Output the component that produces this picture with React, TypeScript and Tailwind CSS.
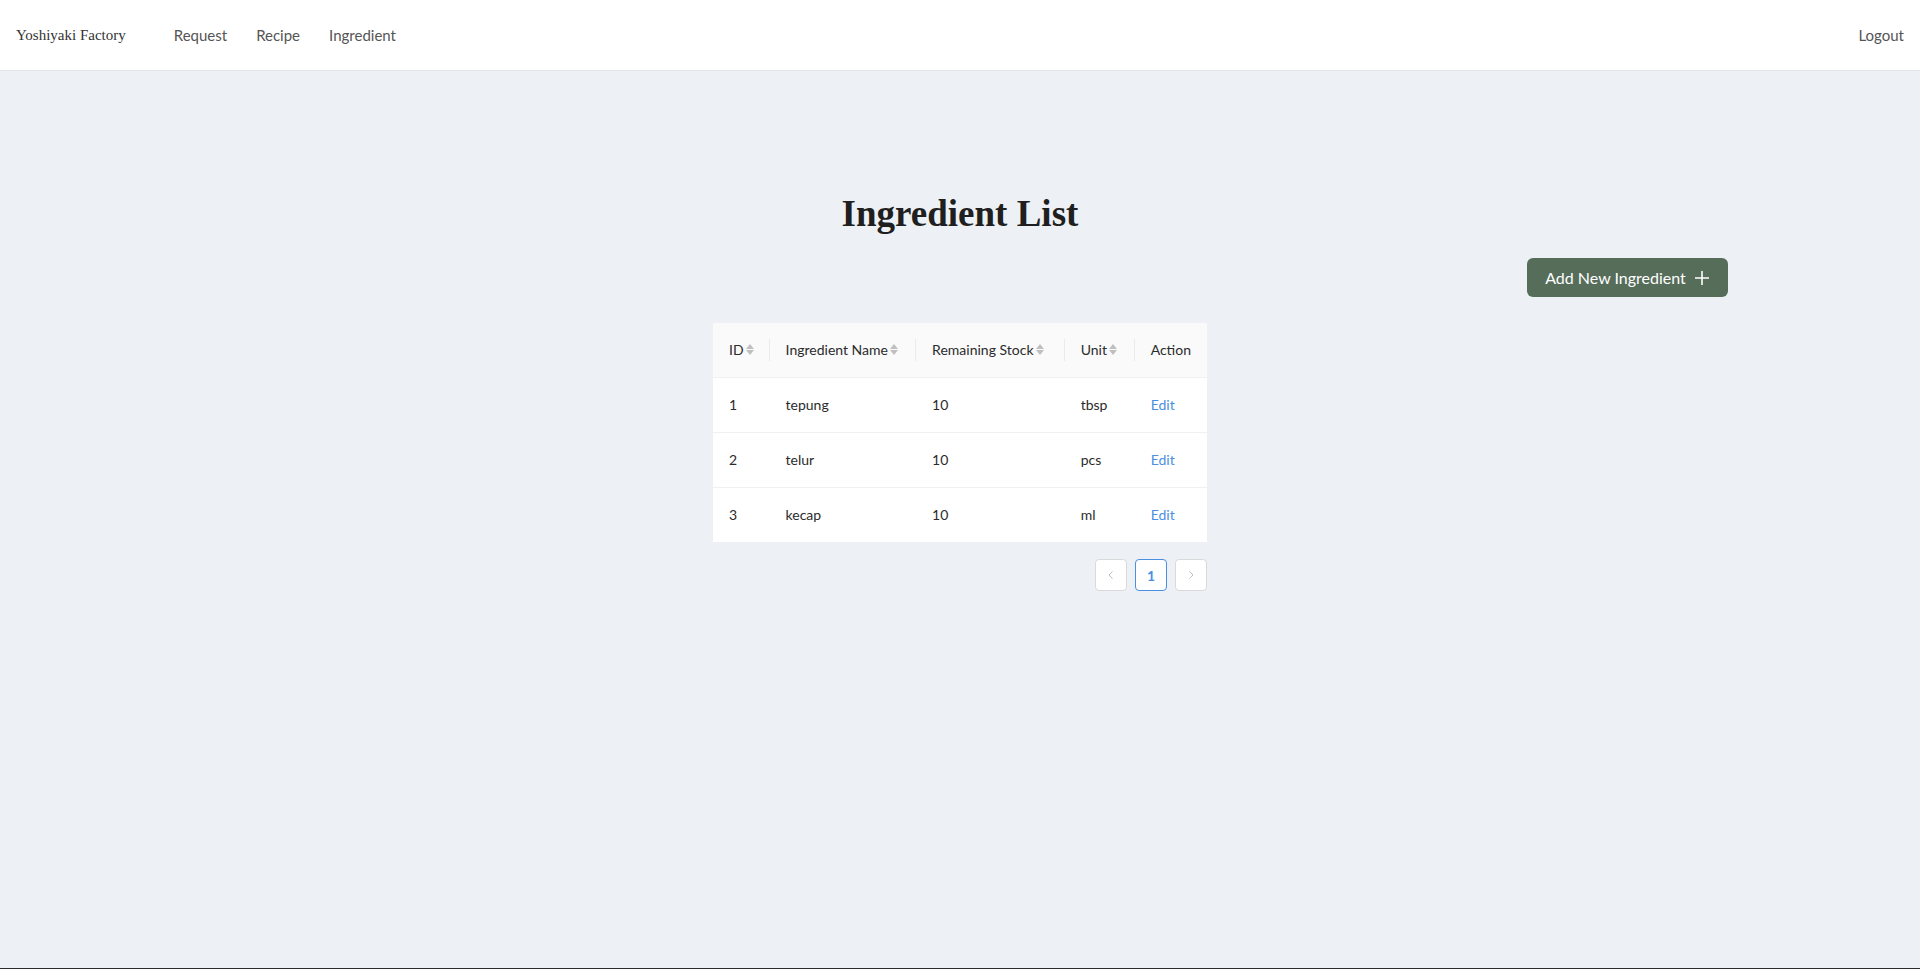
import React from 'react'

const body = { fontFamily: 'Lato, "Open Sans", sans-serif' }
const serif = { fontFamily: '"Liberation Serif", "DejaVu Serif", serif' }

const rows = [
  { id: 1, name: 'tepung', stock: 10, unit: 'tbsp' },
  { id: 2, name: 'telur', stock: 10, unit: 'pcs' },
  { id: 3, name: 'kecap', stock: 10, unit: 'ml' },
]

function SortIcon() {
  return (
    <span className="ml-[2px] inline-flex flex-col gap-[1px]">
      <svg width="8" height="5" viewBox="0 0 8 5">
        <path d="M4 0 L8 5 L0 5 Z" fill="#bfbfbf" />
      </svg>
      <svg width="8" height="5" viewBox="0 0 8 5">
        <path d="M0 0 L8 0 L4 5 Z" fill="#bfbfbf" />
      </svg>
    </span>
  )
}

function Th({ label, sort, width, last }: { label: string; sort?: boolean; width: string; last?: boolean }) {
  return (
    <th className={`relative px-4 text-left font-normal ${width}`}>
      <span className="inline-flex items-center">
        {label}
        {sort && <SortIcon />}
      </span>
      {!last && <span className="absolute right-0 top-1/2 h-[22px] w-px -translate-y-1/2 bg-[#ebebeb]" />}
    </th>
  )
}

export default function App() {
  return (
    <div className="flex h-screen flex-col bg-[#edf1f5] text-[#333]" style={body}>
      {/* Navbar */}
      <header className="flex h-[71px] shrink-0 items-center border-b border-[#e3e7eb] bg-white px-4 text-[15px] text-[#555]">
        <span className="text-[15px] text-[#333]" style={serif}>Yoshiyaki Factory</span>
        <nav className="ml-[48px] flex gap-[29px]">
          <a>Request</a>
          <a>Recipe</a>
          <a>Ingredient</a>
        </nav>
        <a className="ml-auto">Logout</a>
      </header>

      {/* Main Content */}
      <main className="flex-1">
        <h1 className="mt-[119px] text-center text-[37px] leading-[48px] font-bold text-[#1f1f1f]" style={serif}>
          Ingredient List
        </h1>
        <div className="mx-auto mt-[20px] flex max-w-[1536px] justify-end">
          <button className="flex h-[39px] w-[201px] items-center justify-center gap-2 rounded-md bg-[#566d5a] text-[16px] text-white">
            Add New Ingredient
            <svg width="16" height="16" viewBox="0 0 16 16">
              <path d="M8 1 V15 M1 8 H15" stroke="white" strokeWidth="1.6" />
            </svg>
          </button>
        </div>

        <div className="mx-auto mt-[26px] w-[494px]">
          <table className="w-full border-collapse bg-white text-[14px] text-[#2b2b2b]">
            <thead>
              <tr className="h-[54px] border-b border-[#f0f0f0] bg-[#fafafa]">
                <Th label="ID" sort width="w-[56px]" />
                <Th label="Ingredient Name" sort width="w-[147px]" />
                <Th label="Remaining Stock" sort width="w-[149px]" />
                <Th label="Unit" sort width="w-[70px]" />
                <Th label="Action" width="" last />
              </tr>
            </thead>
            <tbody>
              {rows.map((r, i) => (
                <tr key={r.id} className={`h-[55px] ${i < rows.length - 1 ? 'border-b border-[#f0f0f0]' : ''}`}>
                  <td className="px-4">{r.id}</td>
                  <td className="px-4">{r.name}</td>
                  <td className="px-4">{r.stock}</td>
                  <td className="px-4">{r.unit}</td>
                  <td className="px-4 text-[#4a90e2]">Edit</td>
                </tr>
              ))}
            </tbody>
          </table>

          <div className="mt-[17px] flex justify-end gap-2">
            <span className="flex h-8 w-8 items-center justify-center rounded-sm border border-[#d9d9d9] bg-white">
              <svg width="10" height="10" viewBox="0 0 10 10">
                <path d="M6.5 1.5 L3 5 L6.5 8.5" fill="none" stroke="#bfbfbf" strokeWidth="1" />
              </svg>
            </span>
            <span className="flex h-8 w-8 items-center justify-center rounded-sm border border-[#4a90e2] bg-white text-[14px] font-bold text-[#4a90e2]">
              1
            </span>
            <span className="flex h-8 w-8 items-center justify-center rounded-sm border border-[#d9d9d9] bg-white">
              <svg width="10" height="10" viewBox="0 0 10 10">
                <path d="M3.5 1.5 L7 5 L3.5 8.5" fill="none" stroke="#bfbfbf" strokeWidth="1" />
              </svg>
            </span>
          </div>
        </div>
      </main>
      <div className="h-px shrink-0 bg-[#2b2b2b]" />
    </div>
  )
}
